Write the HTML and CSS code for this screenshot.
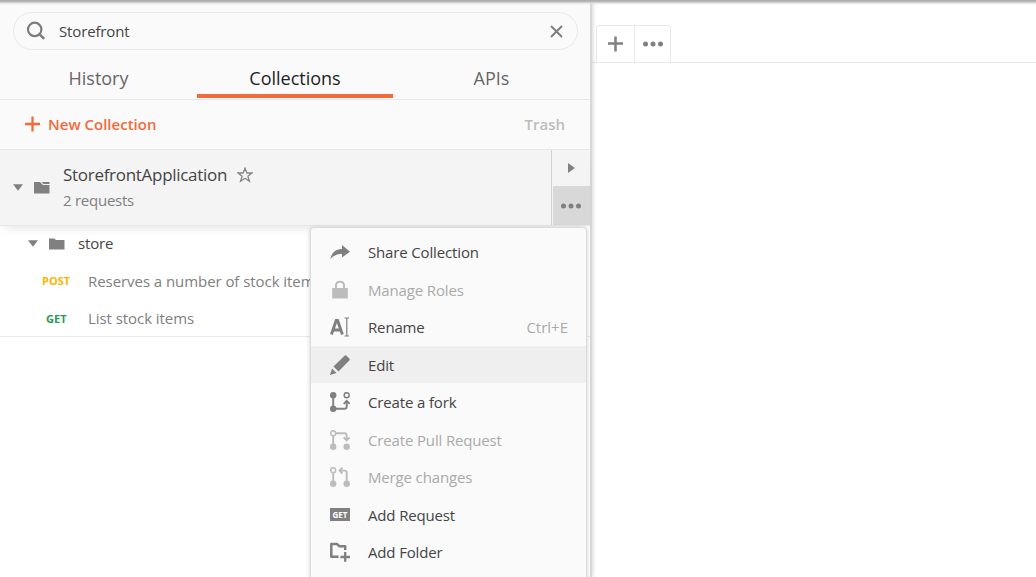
FILE: index.html
```html
<!DOCTYPE html>
<html lang="en">
<head>
<meta charset="utf-8">
<title>Collections</title>
<link rel="stylesheet" href="styles.css">
</head>
<body>
<div class="app">
  <aside class="sidebar">
    <div class="search">
      <svg class="search-icon" width="20" height="20" viewBox="0 0 20 20"><circle cx="8.7" cy="8.4" r="6.7" fill="none" stroke="#7c7c7c" stroke-width="2.2"/><path d="M13.4 13.2L18.2 17.8" stroke="#7c7c7c" stroke-width="2.5"/></svg>
      <span class="search-text">Storefront</span>
      <svg width="13" height="13" viewBox="0 0 13 13"><path d="M1 1L12 12M12 1L1 12" stroke="#7c7c7c" stroke-width="1.8"/></svg>
    </div>
    <nav class="tabs">
      <div class="tab"><span>History</span></div>
      <div class="tab active"><span>Collections</span></div>
      <div class="tab"><span>APIs</span></div>
    </nav>
    <div class="actions">
      <svg width="16" height="16" viewBox="0 0 16 16"><path d="M7.500 .5V15.500M0 8H15" stroke="#f26b3a" stroke-width="2.300"/></svg>
      <span class="new">New Collection</span>
      <span class="trash">Trash</span>
    </div>
    <div class="collection">
      <svg class="caret" width="10" height="7" viewBox="0 0 10 7"><path d="M0 .2H10L5 6.800Z" fill="#808080"/></svg>
      <svg class="folder" width="16" height="13" viewBox="0 0 16 13"><path d="M0 1H6L9 4H15.500V12.500H0Z" fill="#808080"/><path d="M7.500 1H15.500V3H9.500Z" fill="#808080"/></svg>
      <div class="info">
        <div class="title"><span class="name">StorefrontApplication</span>
          <svg width="16" height="16" viewBox="0 0 16 16"><path d="M8 1.300L9.900 6H14.900L10.900 9.200L12.400 14.300L8 11.300L3.600 14.300L5.100 9.200L1.100 6H6.100Z" fill="none" stroke="#858585" stroke-width="1.300"/></svg>
        </div>
        <div class="count">2 requests</div>
      </div>
      <div class="side-buttons">
        <div class="expand"><svg width="7" height="10" viewBox="0 0 7 10"><path d="M0 0L7 5L0 10Z" fill="#808080"/></svg></div>
        <div class="more"><svg width="20" height="6" viewBox="0 0 20 6" fill="#808080"><circle cx="2.500" cy="3" r="2.500"/><circle cx="10" cy="3" r="2.500"/><circle cx="17.500" cy="3" r="2.500"/></svg></div>
      </div>
    </div>
    <div class="tree">
      <div class="tree-row folder-row">
        <svg width="10" height="7" viewBox="0 0 10 7"><path d="M0 .2H10L5 6.800Z" fill="#808080"/></svg>
        <svg width="16" height="12" viewBox="0 0 16 12"><path d="M0 .5H5.500L7 2H15.500V11.500H0Z" fill="#808080"/></svg>
        <span class="store">store</span>
      </div>
      <div class="tree-row"><span class="method post">POST</span><span class="req">Reserves a number of stock items</span></div>
      <div class="tree-row"><span class="method get">GET</span><span class="req">List stock items</span></div>
    </div>
  </aside>
  <main class="content">
    <div class="tabbar">
      <div class="tab-buttons">
        <div class="tb plus"><svg width="16" height="16" viewBox="0 0 16 16"><path d="M7.500 .5V15.500M0 7.500H15" stroke="#808080" stroke-width="2.500"/></svg></div>
        <div class="tb"><svg width="20" height="6" viewBox="0 0 20 6" fill="#808080"><circle cx="2.500" cy="3" r="2.500"/><circle cx="10" cy="3" r="2.500"/><circle cx="17.500" cy="3" r="2.500"/></svg></div>
      </div>
    </div>
  </main>
  <div class="menu">
    <div class="item"><svg width="20" height="20" viewBox="0 0 20 20"><path d="M.3 17C2 10 6 7 12 7V3L20 9.800L12 15.500V12C7 12 3.500 13.500 .3 17Z" fill="#808080"/></svg><span>Share Collection</span></div>
    <div class="item disabled"><svg width="20" height="20" viewBox="0 0 20 20"><path d="M6 9V5.500C6 .5 14 .5 14 5.500V9" fill="none" stroke="#bcbcbc" stroke-width="2"/><rect x="2.200" y="8" width="15.600" height="10.500" fill="#bcbcbc"/></svg><span>Manage Roles</span></div>
    <div class="item"><svg width="20" height="20" viewBox="0 0 20 20"><path d="M1.400 17.500L6.200 3.500H7.600L12.400 17.500M3 13H10.500" fill="none" stroke="#808080" stroke-width="2.900"/><path d="M14.500 1H19M16.800 1V19M14.500 19H19" fill="none" stroke="#808080" stroke-width="1.200"/></svg><span>Rename</span><span class="key">Ctrl+E</span></div>
    <div class="item hover"><svg width="20" height="20" viewBox="0 0 20 20" fill="#808080"><path d="M0 20L2 13.500L6.500 18Z"/><path d="M3.500 11.500L14.500 .8Q15.500 -.2 16.500 .8L19.300 3.400Q20.300 4.400 19.300 5.400L8.500 16.500Z"/></svg><span>Edit</span></div>
    <div class="item"><svg width="20" height="20" viewBox="0 0 20 20"><circle cx="3.200" cy="3.200" r="3.200" fill="#808080"/><circle cx="3.200" cy="16.800" r="3.200" fill="#808080"/><circle cx="16.700" cy="3.200" r="2.500" fill="none" stroke="#808080" stroke-width="1.500"/><path d="M3.200 3V16.800H14.500Q16.700 16.800 16.700 14.500V9M13.700 11.800L16.700 8.800L19.700 11.800" fill="none" stroke="#808080" stroke-width="1.900"/></svg><span>Create a fork</span></div>
    <div class="item disabled"><svg width="20" height="20" viewBox="0 0 20 20"><circle cx="3.200" cy="3.200" r="2.500" fill="none" stroke="#bcbcbc" stroke-width="1.500"/><circle cx="3.200" cy="16.800" r="3.200" fill="#bcbcbc"/><circle cx="16.700" cy="16.800" r="3.200" fill="#bcbcbc"/><path d="M3.200 5.500V16M5.500 3.200H14.500Q16.700 3.200 16.700 5.500V10M13.700 7.500L16.700 10.400L19.700 7.500" fill="none" stroke="#bcbcbc" stroke-width="1.900"/></svg><span>Create Pull Request</span></div>
    <div class="item disabled"><svg width="20" height="20" viewBox="0 0 20 20"><circle cx="3.200" cy="3.200" r="2.500" fill="none" stroke="#bcbcbc" stroke-width="1.500"/><circle cx="3.200" cy="16.800" r="3.200" fill="#bcbcbc"/><circle cx="16.700" cy="16.800" r="3.200" fill="#bcbcbc"/><path d="M3.200 5.500V16M16.700 16V5.500Q16.700 3.600 14.500 3.600H9.500M12.400 .8L9.500 3.600L12.400 6.500" fill="none" stroke="#bcbcbc" stroke-width="1.900"/></svg><span>Merge changes</span></div>
    <div class="item"><span class="badge">GET</span><span>Add Request</span></div>
    <div class="item"><svg width="20" height="20" viewBox="0 0 20 20"><path d="M8.500 14.800H1.300V1.900H7L9.500 4.300H15.200V8" fill="none" stroke="#808080" stroke-width="2.500" stroke-linejoin="round"/><path d="M15.200 10V19.800M10.400 15H20" stroke="#808080" stroke-width="2.300"/></svg><span>Add Folder</span></div>
  </div>
</div>
</body>
</html>
```
FILE: styles.css
```css
* { box-sizing: border-box; }
body { margin: 0; font-family: "Open Sans", sans-serif; font-size: 15px; letter-spacing: -.15px; color: #444; background: #fff; }
svg { display: block; flex: none; }
span { white-space: nowrap; }
.app { position: relative; display: flex; width: 1036px; height: 577px; overflow: hidden; }
.app::before { content: ""; position: absolute; z-index: 5; top: 0; left: 0; right: 0; height: 5px; background: linear-gradient(#a8a8a8, #bcbcbc 35%, rgba(220,220,220,.7) 65%, rgba(250,250,250,0)); }
.sidebar { position: relative; width: 592px; border-right: 2px solid #d8d8d8; box-shadow: 1px 0 4px rgba(0,0,0,.16); padding-top: 12px; background: linear-gradient(#fafafa 226px, #fff 226px); flex: none; display: flex; flex-direction: column; }
.search { height: 38px; margin: 0 12px 0 13px; border: 1px solid #e8e8e8; border-radius: 19px; display: flex; align-items: center; padding: 0 14px 0 12px; flex: none; }
.search-text { margin-left: 13px; flex: 1; }
.tabs { display: grid; grid-template-columns: 197px 196px 197px; height: 50px; border-bottom: 1px solid #e8e8e8; font-size: 18px; letter-spacing: 0; color: #666; flex: none; }
.tab { display: flex; justify-content: center; padding-top: 16px; line-height: 25px; }
.tab.active { color: #222; border-bottom: 4px solid #f26b3a; height: 48px; }
.actions { height: 50px; display: flex; align-items: center; padding: 0 25px 2px; border-bottom: 1px solid #e8e8e8; flex: none; font-weight: 600; letter-spacing: 0; }
.new { color: #f26b3a; margin-left: 7px; flex: 1; }
.trash { color: #bcbcbc; }
.collection { position: relative; height: 76px; background: #f4f4f4; border-bottom: 1px solid #e8e8e8; display: flex; align-items: center; padding-left: 13px; flex: none; box-shadow: 0 6px 10px -5px rgba(0,0,0,.13); }
.folder { margin: 0 13px 0 11px; }
.info { flex: 1; padding-bottom: 2px; }
.title { display: flex; align-items: center; gap: 10px; font-size: 17px; line-height: 26px; letter-spacing: -.29px; }
.count { line-height: 24px; letter-spacing: -.25px; color: #808080; }
.side-buttons { width: 39px; height: 75px; border-left: 1px solid #d2d2d2; display: flex; flex-direction: column; padding-left: 1px; }
.expand, .more { display: flex; align-items: center; justify-content: center; }
.expand { height: 36px; }
.more { flex: 1; padding-right: 2px; background: #d8d8d8; }
.tree { height: 111px; border-bottom: 1px solid #e8e8e8; flex: none; }
.tree-row { height: 37.5px; display: flex; align-items: center; color: #808080; }
.folder-row { height: 36px; gap: 11px; padding: 0 0 1px 28px; color: #444; }
.store { margin-left: 2px; padding-bottom: 2px; }
.method { width: 88px; padding-left: 42px; font-size: 11px; font-weight: 700; letter-spacing: 0; }
.req { letter-spacing: -.06px; }
.post { color: #ffb400; }
.get { color: #249d50; padding-left: 46px; }
.content { flex: 1; background: #fff; }
.tabbar { height: 63px; padding: 25px 0 0 4px; border-bottom: 1px solid #e8e8e8; }
.tab-buttons { width: 75px; height: 37px; border: 1px solid #e8e8e8; border-bottom: 0; border-radius: 3px 3px 0 0; display: flex; }
.tb { flex: 1; display: flex; align-items: center; justify-content: center; }
.plus { flex: 0 0 38px; border-right: 1px solid #e8e8e8; }
.menu { position: absolute; z-index: 4; left: 310px; top: 227px; width: 277px; height: 370px; padding-top: 5px; background: #fafafa; border: 1px solid #dcdcdc; border-radius: 4px; box-shadow: 0 1px 4px rgba(0,0,0,.2); }
.item { height: 37.5px; display: flex; align-items: center; padding: 0 18px 0 19px; gap: 18px; }
.item:nth-child(even) { padding-top: 1px; }
.disabled { color: #aaa; }
.hover { background: #efefef; }
.key { margin-left: auto; color: #aaa; letter-spacing: 0; }
.badge { width: 20px; height: 13px; background: #808080; color: #fff; font-size: 8px; font-weight: 700; line-height: 13px; text-align: center; letter-spacing: 0; }
```
